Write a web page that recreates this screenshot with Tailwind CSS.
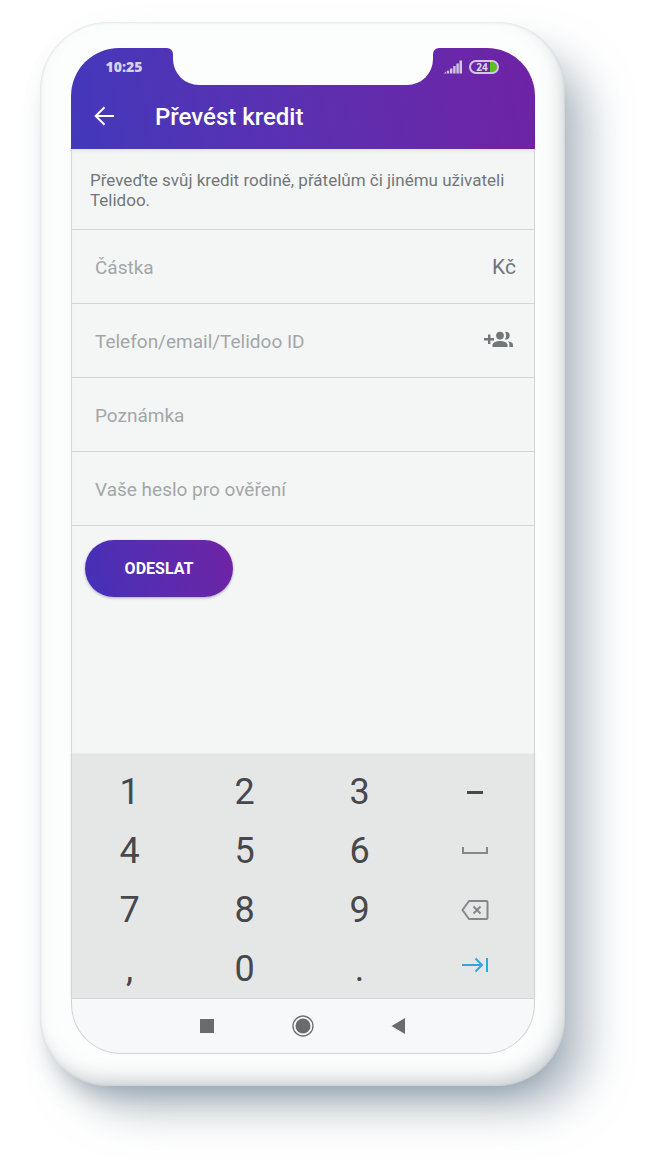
<!DOCTYPE html>
<html lang="cs">
<head>
  <meta charset="UTF-8" />
  <meta name="viewport" content="width=device-width, initial-scale=1.0" />
  <title>Převést kredit - Telidoo</title>
  <script src="https://cdn.jsdelivr.net/npm/@tailwindcss/browser@4"></script>
</head>
<body class="bg-white font-['Roboto',sans-serif] text-[#737679]">
  <div class="pt-[22px] pb-20 pl-10 pr-20">
    <!-- Phone body -->
    <div class="rounded-[68px] bg-[#fcfdfd] pt-[26px] pb-8 pl-[31px] pr-[30px] shadow-[inset_-6px_-10px_18px_-4px_rgba(150,162,168,0.5),inset_0_0_3px_rgba(120,130,135,0.3),0_18px_24px_-12px_rgba(110,130,145,0.5),28px_28px_44px_-6px_rgba(120,138,153,0.55)]">
      <div>
        <!-- Header -->
        <header class="rounded-t-[48px] bg-linear-80 from-[#4338bb] to-[#6f22a5] text-white">
          <div class="flex h-[37px] items-start justify-between">
            <div class="flex h-[37px] w-[102px] items-center justify-center pl-1 font-['Open_Sans',sans-serif] text-sm font-extrabold text-[#d6d3e8]">10:25</div>
            <div class="relative h-[37px] flex-1 rounded-b-[26px] bg-[#fcfdfd]">
              <svg class="absolute top-0 -left-[6px]" width="6" height="6" viewBox="0 0 6 6" fill="#fcfdfd"><path d="M0 0h6v6A6 6 0 0 0 0 0z"/></svg>
              <svg class="absolute top-0 -right-[6px]" width="6" height="6" viewBox="0 0 6 6" fill="#fcfdfd"><path d="M6 0H0v6A6 6 0 0 1 6 0z"/></svg>
            </div>
            <div class="flex h-[37px] w-[102px] items-center gap-[7px] pl-[11px]">
              <svg width="18" height="14" viewBox="0 0 18 14" fill="#d3c8e4"><path d="M0 13.500 2 11.500V13.500zM2.800 10.800h2.400v2.700H2.800zM6 8.600h2.400v4.900H6zM9.200 6h2.400v7.500H9.200zM12.400 3.400h2.400v10.100h-2.400zM15.500.6H18v12.900h-2.500z"/></svg>
              <div class="relative flex h-[14px] w-[30px] items-center justify-center pr-1">
                <svg class="absolute inset-0" width="30" height="14" viewBox="0 0 30 14"><path d="M21 2h2a5 5 0 0 1 0 10h-2z" fill="#55c51d"/><rect x="1" y="1" width="28" height="12" rx="6" fill="none" stroke="#d3c8e4" stroke-width="2"/></svg>
                <span class="relative font-['Open_Sans',sans-serif] text-[10px] font-bold leading-none text-[#e0d8ec]">24</span>
              </div>
            </div>
          </div>
          <div class="flex h-16 items-center pl-[22px]">
            <button type="button" aria-label="Zpět" class="mr-10 pb-0.5">
              <svg width="22" height="22" viewBox="0 0 22 22" fill="none" stroke="#fff" stroke-width="2"><path d="M21 11H3M11.500 2.200 2.700 11l8.800 8.800"/></svg>
            </button>
            <h1 class="text-2xl font-medium">Převést kredit</h1>
          </div>
        </header>

        <!-- Transfer form -->
        <form class="border-x border-[#d5d8da] bg-[#f4f6f6] shadow-[inset_0_4px_4px_-3px_rgba(120,125,135,0.2)]">
          <p class="border-b border-[#d2d5d7] pt-[21px] pr-5 pb-[19px] pl-[18px] text-[17px] leading-5">Převeďte svůj kredit rodině, přátelům či jinému uživateli Telidoo.</p>
          <div class="flex h-[74px] items-center border-b border-[#d2d5d7] pt-[3px] pr-[18px] pl-[23px]">
            <input type="text" aria-label="Částka" placeholder="Částka" class="min-w-0 flex-1 text-[19px] outline-none placeholder:text-[#a3a6a8]">
            <span class="text-[21px]">Kč</span>
          </div>
          <div class="flex h-[74px] items-center border-b border-[#d2d5d7] pt-[3px] pr-5 pl-[23px]">
            <input type="text" aria-label="Telefon/email/Telidoo ID" placeholder="Telefon/email/Telidoo ID" class="min-w-0 flex-1 text-[19px] outline-none placeholder:text-[#a3a6a8]">
            <button type="button" aria-label="Přidat kontakt" class="pb-1">
              <svg width="30" height="18" viewBox="0 0 30 18" fill="#737679"><path d="M4 3.500h2.400V7H10v2.400H6.400V13H4V9.400H0V7h4z"/><circle cx="16" cy="4.600" r="3.900"/><path d="M21 .8a3.900 3.900 0 1 1 0 7.600c1.500-2.200 1.500-5.400 0-7.600z"/><path d="M8.500 16v-2.200c0-2.600 4.500-3.900 7.500-3.900s7.500 1.300 7.500 3.900V16z"/><path d="M24 10.200c2.800.5 5 1.600 5 3.600V16h-3.600v-2.200c0-1.500-.5-2.600-1.400-3.600z"/></svg>
            </button>
          </div>
          <div class="flex h-[74px] items-center border-b border-[#d2d5d7] pt-[3px] pr-5 pl-[23px]">
            <input type="text" aria-label="Poznámka" placeholder="Poznámka" class="min-w-0 flex-1 text-[19px] outline-none placeholder:text-[#a3a6a8]">
          </div>
          <div class="flex h-[74px] items-center border-b border-[#d2d5d7] pt-[3px] pr-5 pl-[23px]">
            <input type="password" aria-label="Vaše heslo pro ověření" placeholder="Vaše heslo pro ověření" class="min-w-0 flex-1 text-[19px] outline-none placeholder:text-[#a3a6a8]">
          </div>
          <div class="h-[229px] px-[13px] pt-[14px]">
            <button type="submit" class="h-[57px] w-[148px] rounded-full bg-linear-75 from-[#4330b8] to-[#6f22a5] text-base font-bold text-white shadow-[0_1px_3px_rgba(60,60,90,0.4)]">ODESLAT</button>
          </div>
        </form>

        <!-- Numeric keyboard -->
        <div class="grid auto-rows-[59px] grid-cols-4 border-x border-b border-[#d2d5d7] bg-[#e5e7e7] pt-[7px] pr-0.5 text-[36px] text-[#46484c] shadow-[0_-1px_2px_rgba(90,95,100,0.15)]">
          <button type="button">1</button>
          <button type="button">2</button>
          <button type="button">3</button>
          <button type="button" aria-label="Minus" class="grid place-items-center"><svg width="28" height="20" viewBox="0 0 28 20" fill="#46484c"><path d="M6 9h16v3H6z"/></svg></button>
          <button type="button">4</button>
          <button type="button">5</button>
          <button type="button">6</button>
          <button type="button" aria-label="Mezera" class="grid place-items-center"><svg width="28" height="20" viewBox="0 0 28 20" fill="none" stroke="#85888a" stroke-width="2"><path d="M2 6v6h24V6"/></svg></button>
          <button type="button">7</button>
          <button type="button">8</button>
          <button type="button">9</button>
          <button type="button" aria-label="Smazat" class="grid place-items-center"><svg width="28" height="20" viewBox="0 0 28 20" fill="none" stroke="#85888a" stroke-width="2"><path d="M8 1h17.500q1 0 1 1v16q0 1-1 1H8L1.500 10z" stroke-linejoin="round"/><path d="m12.500 6.500 7 7m0-7-7 7"/></svg></button>
          <button type="button">,</button>
          <button type="button">0</button>
          <button type="button">.</button>
          <button type="button" aria-label="Další" class="grid place-items-center pb-2"><svg width="28" height="20" viewBox="0 0 28 20" fill="none" stroke="#30a5e6" stroke-width="2"><path d="M1 10h20M14.500 3.500 21 10l-6.500 6.500M26 3v14"/></svg></button>
        </div>

        <!-- System navigation -->
        <nav class="flex h-[55px] items-center justify-center gap-[72px] rounded-b-[50px] border-x border-b border-[#d2d5d7] bg-[#f7f8fa]">
          <button type="button" aria-label="Poslední aplikace"><svg width="24" height="24" viewBox="0 0 24 24" fill="#686c6e"><path d="M5 5h14v14H5z"/></svg></button>
          <button type="button" aria-label="Domů"><svg width="24" height="24" viewBox="0 0 24 24"><circle cx="12" cy="12" r="10" fill="none" stroke="#686c6e" stroke-width="1.300"/><circle cx="12" cy="12" r="7.500" fill="#686c6e"/></svg></button>
          <button type="button" aria-label="Zpět v systému"><svg width="24" height="24" viewBox="0 0 24 24" fill="#686c6e"><path d="M18 4v16L4.500 12z"/></svg></button>
        </nav>
      </div>
    </div>
  </div>
</body>
</html>
